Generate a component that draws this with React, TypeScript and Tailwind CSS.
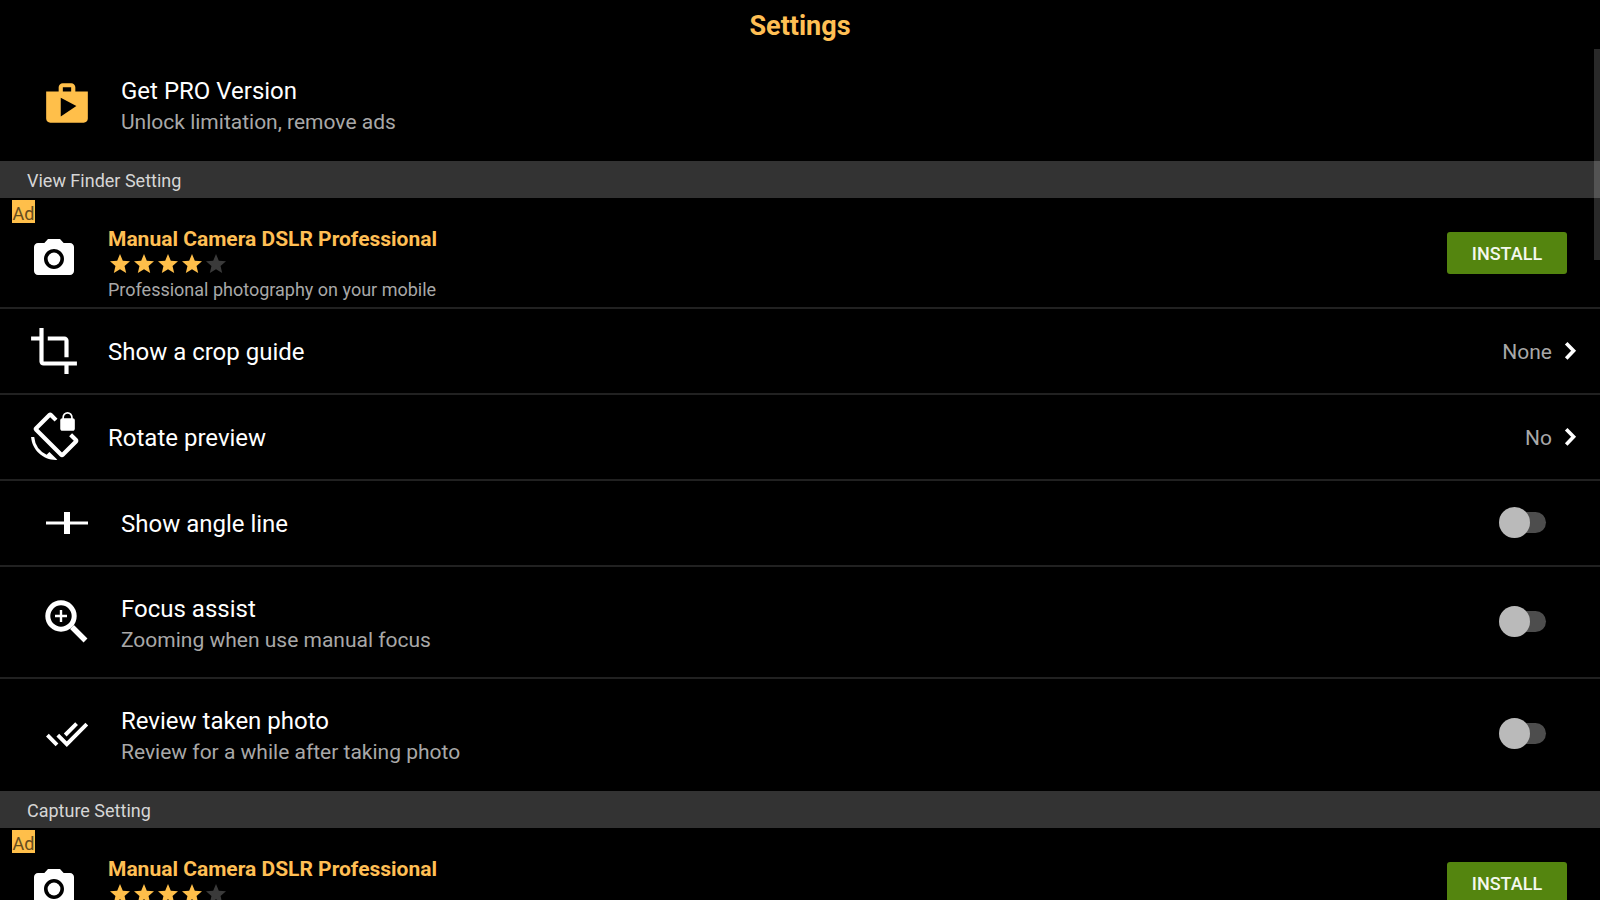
import { useId, type ReactNode } from "react";
import { MdCrop, MdPhotoCamera, MdScreenLockRotation, MdShop, MdStar } from "react-icons/md";

function AngleLineIcon() {
  return (
    <svg viewBox="0 0 50 50" className="size-[50px]" fill="currentColor" aria-hidden="true">
      <rect x="4" y="23.5" width="42" height="3" />
      <rect x="22" y="14" width="6" height="22" />
    </svg>
  );
}

function FocusIcon() {
  return (
    <svg viewBox="0 0 50 50" className="size-[50px]" fill="none" stroke="currentColor" aria-hidden="true">
      <circle cx="19" cy="19" r="13.2" strokeWidth="5" />
      <path d="M19 13v12M13 19h12" strokeWidth="2.4" />
      <path d="M30 30L43.5 43.5" strokeWidth="5.5" />
    </svg>
  );
}

function DoubleCheckIcon() {
  return (
    <svg viewBox="0 0 50 50" className="size-[50px]" fill="none" stroke="currentColor" aria-hidden="true">
      <path d="M5.4 26.2L15 35.8M15.8 26.2L24.8 35.2L44.8 15.2M23.2 26L34.6 14.6" strokeWidth="3.9" />
    </svg>
  );
}

function ChevronIcon() {
  return (
    <svg viewBox="0 0 36 36" className="size-9 text-white" fill="none" stroke="currentColor" aria-hidden="true">
      <path d="M14.2 10.2L21.6 17.8L14.2 25.4" strokeWidth="3.6" />
    </svg>
  );
}

function SectionHeader({ children }: { children: ReactNode }) {
  return (
    <h2 className="flex h-[37px] items-center bg-[#333333] px-[27px] pt-[2px] text-[18px] text-[#d6d6d6]">
      {children}
    </h2>
  );
}

function AdRow({ tagline }: { tagline?: string }) {
  return (
    <article className="relative flex h-[111px] items-start border-b-2 border-[#212121] pr-[33px] pl-[30px]">
      <span className="absolute top-[2px] left-3 flex h-[23px] w-[23px] items-end justify-center bg-[#ffbf4a] text-[18px] leading-[18px] text-[#664c1e]">
        Ad
      </span>
      <MdPhotoCamera className="mt-[37px] size-12 shrink-0 text-white" />
      <div className="ml-[30px] flex-1 pt-[28px]">
        <h3 className="text-[21px] leading-[26px] font-bold text-[#ffbf54]">
          Manual Camera DSLR Professional
        </h3>
        <div className="flex h-[24px] items-center" role="img" aria-label="4 out of 5 stars">
          {[1, 2, 3, 4, 5].map((n) => (
            <MdStar key={n} className={n <= 4 ? "size-6 text-[#ffbf4a]" : "size-6 text-[#3a3a3a]"} />
          ))}
        </div>
        {tagline && <p className="text-[18px] leading-[28px] text-[#a8a8a8]">{tagline}</p>}
      </div>
      <button
        type="button"
        className="mt-[34px] h-[42px] w-[120px] rounded-[3px] bg-[#54850f] text-[18px] font-medium text-[#f4f8ee]"
      >
        INSTALL
      </button>
    </article>
  );
}

function LinkRow({ icon, title, value }: { icon: ReactNode; title: string; value: string }) {
  return (
    <a href="#" className="flex h-[86px] items-center border-b-2 border-[#212121] pr-3 pl-[29px]">
      {icon}
      <span className="ml-[29px] flex-1 pt-[2px] text-[24px] leading-[32px] text-white">{title}</span>
      <span className="pt-[2px] text-[21px] leading-[32px] text-[#a8a8a8]">{value}</span>
      <ChevronIcon />
    </a>
  );
}

function RowText({ title, subtitle }: { title: string; subtitle?: string }) {
  return (
    <span className={`ml-[29px] flex flex-1 flex-col ${subtitle ? "pt-1" : "pt-[2px]"}`}>
      <span className="text-[24px] leading-[32px] text-white">{title}</span>
      {subtitle && <span className="text-[21px] leading-[30px] text-[#a8a8a8]">{subtitle}</span>}
    </span>
  );
}

type ToggleRowProps = { icon: ReactNode; title: string; subtitle?: string; last?: boolean };

function ToggleRow({ icon, title, subtitle, last }: ToggleRowProps) {
  const id = useId();
  return (
    <div
      className={`flex items-center border-b-2 pr-[54px] pl-[42px] ${subtitle ? "h-[112px]" : "h-[86px]"} ${
        last ? "border-transparent" : "border-[#212121]"
      }`}
    >
      <label htmlFor={id} className="flex flex-1 items-center">
        {icon}
        <RowText title={title} subtitle={subtitle} />
      </label>
      <span className="relative mb-[2px] flex h-[31px] w-[47px] items-center justify-end">
        <input
          id={id}
          type="checkbox"
          role="switch"
          className="peer h-[21px] w-10 appearance-none rounded-full bg-[#4d4d4d]"
        />
        <span className="pointer-events-none absolute top-0 left-0 size-[31px] rounded-full bg-[#bababa] peer-checked:left-4" />
      </span>
    </div>
  );
}

export default function App() {
  return (
    <div className="relative h-screen overflow-hidden bg-black font-[Roboto,sans-serif]">
      <header className="flex h-[49px] items-center justify-center pt-1">
        <h1 className="text-[27px] font-bold text-[#ffbf54]">Settings</h1>
      </header>
      <main>
        <a href="#" className="flex h-[112px] items-center border-b-2 border-transparent pr-[53px] pl-[42px]">
          <MdShop className="size-[50px] shrink-0 text-[#ffbf4a]" />
          <RowText title="Get PRO Version" subtitle="Unlock limitation, remove ads" />
        </a>
        <SectionHeader>View Finder Setting</SectionHeader>
        <AdRow tagline="Professional photography on your mobile" />
        <LinkRow icon={<MdCrop className="size-[50px] text-white" />} title="Show a crop guide" value="None" />
        <LinkRow
          icon={<MdScreenLockRotation className="size-[50px] text-white" />}
          title="Rotate preview"
          value="No"
        />
        <div className="text-white">
          <ToggleRow icon={<AngleLineIcon />} title="Show angle line" />
          <ToggleRow icon={<FocusIcon />} title="Focus assist" subtitle="Zooming when use manual focus" />
          <ToggleRow
            icon={<DoubleCheckIcon />}
            title="Review taken photo"
            subtitle="Review for a while after taking photo"
            last
          />
        </div>
        <SectionHeader>Capture Setting</SectionHeader>
        <AdRow />
      </main>
      <div className="absolute top-[49px] right-0 h-[211px] w-[6px] bg-white/16" />
    </div>
  );
}
